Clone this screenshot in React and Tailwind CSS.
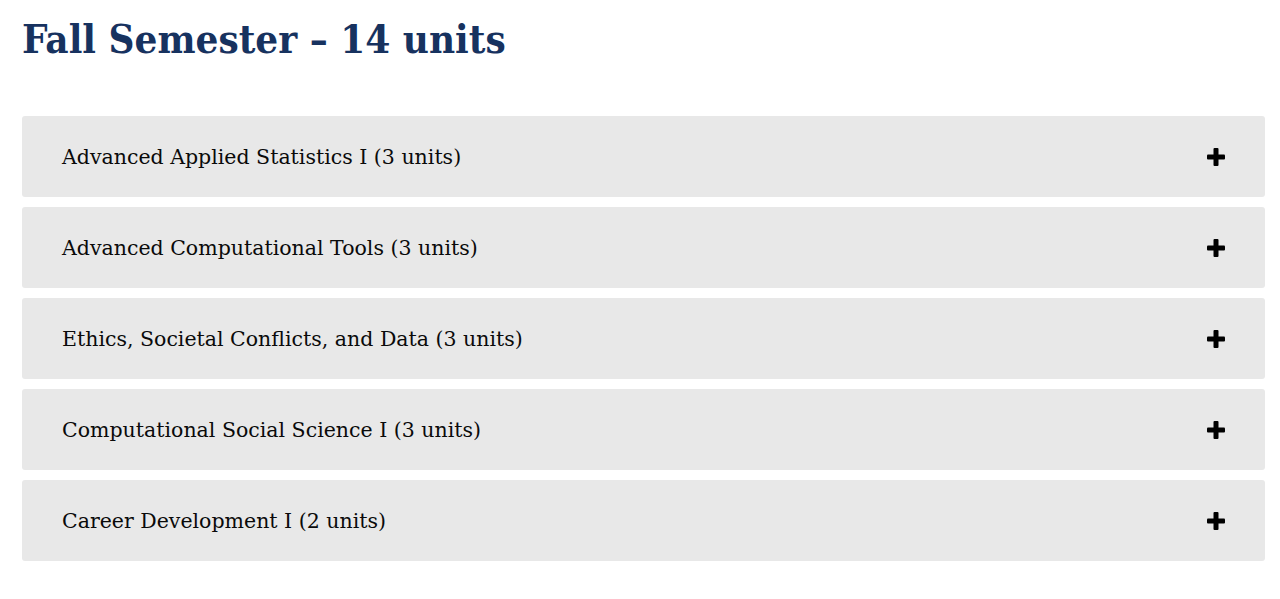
import React from 'react'

const courses = [
  'Advanced Applied Statistics I (3 units)',
  'Advanced Computational Tools (3 units)',
  'Ethics, Societal Conflicts, and Data (3 units)',
  'Computational Social Science I (3 units)',
  'Career Development I (2 units)',
]

function PlusIcon() {
  return (
    <svg width="18" height="18" viewBox="0 0 18 18" aria-hidden="true">
      <rect x="6.5" y="0" width="5" height="18" rx="1" fill="#000" />
      <rect x="0" y="6.5" width="18" height="5" rx="1" fill="#000" />
    </svg>
  )
}

export default function App() {
  return (
    <div className="bg-white min-h-screen px-[22px] pt-[14px]" style={{ fontFamily: '"DejaVu Serif", "Liberation Serif", serif' }}>
      <h1
        className="text-[#17325f] text-[40px] leading-[50px] font-bold"
        style={{ fontFamily: '"DejaVu Serif Condensed", "DejaVu Serif", serif' }}
      >
        Fall Semester – 14 units
      </h1>

      <div className="mt-[52px] flex flex-col gap-[10px] w-[1243px]">
        {courses.map((c) => (
          <button
            key={c}
            className="flex items-center justify-between h-[81px] bg-[#e8e8e8] rounded-[3px] pl-[40px] pr-[40px] text-left"
          >
            <span className="text-[20.5px] text-[#0a0a0a] font-normal pt-[2px]">{c}</span>
            <PlusIcon />
          </button>
        ))}
      </div>
    </div>
  )
}
